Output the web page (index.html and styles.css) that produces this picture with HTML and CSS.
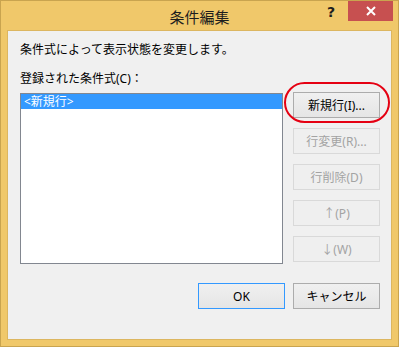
FILE: index.html
```html
<!DOCTYPE html>
<html lang="ja">
<head>
<meta charset="utf-8">
<link rel="stylesheet" href="styles.css">
</head>
<body>
<div class="window">
  <div class="titlebar">
    <span class="title">条件編集</span>
    <span class="help">?</span>
    <span class="close">
      <svg width="10" height="10" viewBox="0 0 10 10"><path d="M1 1L9 9M9 1L1 9" stroke="#fff" stroke-width="2"/></svg>
    </span>
  </div>
  <div class="client">
    <p class="desc">条件式によって表示状態を変更します。</p>
    <p class="label">登録された条件式(C)：</p>
    <div class="main">
      <div class="listbox">
        <div class="row selected">&lt;新規行&gt;</div>
      </div>
      <div class="side">
        <button class="btn">新規行(I)...</button>
        <button class="btn" disabled>行変更(R)...</button>
        <button class="btn" disabled>行削除(D)</button>
        <button class="btn" disabled>↑(P)</button>
        <button class="btn" disabled>↓(W)</button>
      </div>
    </div>
    <div class="footer">
      <button class="btn default">OK</button>
      <button class="btn">キャンセル</button>
    </div>
  </div>
  <svg class="mark" width="106" height="41" viewBox="0 0 106 41"><rect x="1" y="1" width="104" height="39" rx="19.5" ry="19.5" fill="none" stroke="#e50012" stroke-width="2"/></svg>
</div>
</body>
</html>
```
FILE: styles.css
```css
html, body {
  margin: 0;
  padding: 0;
  background: #f0c86a;
}
body {
  font-family: "Noto Sans", "Noto Sans CJK JP", sans-serif;
  font-size: 12px;
  color: #000;
}
.window {
  position: relative;
  width: 399px;
  height: 347px;
  box-sizing: border-box;
  border: 1px solid #c9a44f;
  background: #f0c86a;
  display: flex;
  flex-direction: column;
}
.titlebar {
  position: relative;
  height: 29px;
  display: flex;
  justify-content: center;
  align-items: center;
}
.title {
  font-family: "Noto Sans CJK JP", sans-serif;
  font-size: 15px;
  line-height: 29px;
  color: #1e1e1e;
  padding-top: 1px;
}
.help {
  position: absolute;
  left: 326px;
  top: 2px;
  font-family: "DejaVu Sans", sans-serif;
  font-weight: bold;
  font-size: 14px;
  line-height: 18px;
  color: #1e1e1e;
}
.close {
  position: absolute;
  right: 5px;
  top: 0;
  width: 45px;
  height: 20px;
  background: #c75050;
  display: flex;
  align-items: center;
  justify-content: center;
}
.client {
  margin: 0 6px 6px 6px;
  height: 310px;
  box-sizing: border-box;
  border: 1px solid #dcb660;
  background: #f0f0f0;
  padding: 11px 11px 0 12px;
  display: flex;
  flex-direction: column;
}
.desc, .label {
  margin: 0;
  line-height: 16px;
  white-space: nowrap;
}
.label {
  margin-top: 13px;
}
.main {
  display: flex;
  gap: 10px;
  margin-top: 5px;
}
.listbox {
  width: 263px;
  height: 171px;
  box-sizing: border-box;
  border: 1px solid #828790;
  background: #fff;
  margin-top: 1px;
}
.row {
  height: 15px;
  line-height: 15px;
  padding-left: 3px;
  white-space: nowrap;
}
.row.selected {
  background: #3399ff;
  color: #fff;
}
.side {
  display: flex;
  flex-direction: column;
  gap: 10px;
}
.btn {
  width: 87px;
  height: 26px;
  box-sizing: border-box;
  margin: 0;
  padding: 0;
  border: 1px solid #acacac;
  border-radius: 0;
  background: linear-gradient(#f0f0f0, #e5e5e5);
  font-family: "Noto Sans", "Noto Sans CJK JP", sans-serif;
  font-size: 12px;
  color: #000;
  white-space: nowrap;
}
.btn:disabled {
  border-color: #d9d9d9;
  background: #efefef;
  color: #a3a3a3;
}
.btn.default {
  border-color: #3399ff;
}
.footer {
  display: flex;
  justify-content: flex-end;
  gap: 8px;
  margin-top: 19px;
}
.mark {
  position: absolute;
  left: 283px;
  top: 81px;
}
```
